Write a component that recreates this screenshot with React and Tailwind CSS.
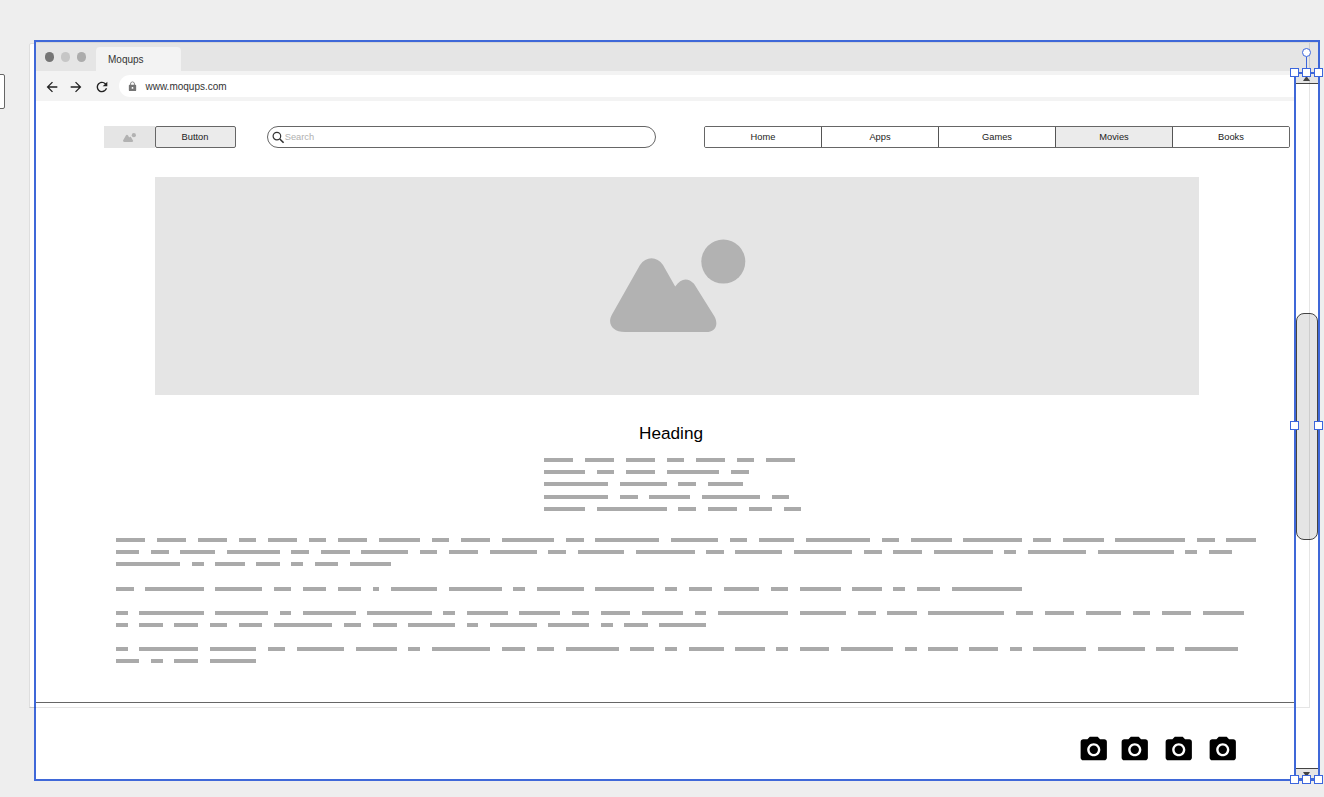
import React from "react";
import { MdArrowBack, MdArrowForward, MdRefresh, MdLock, MdPhotoCamera } from "react-icons/md";

const UNIT = 5.845;

const INTRO = [
  [5, 5, 5, 3, 5, 3, 5],
  [7, 3, 5, 9, 3],
  [11, 8, 3, 6],
  [11, 3, 7, 10, 3],
  [7, 12, 3, 5, 4, 3],
];

const PARAGRAPHS = [
  [
    [5, 5, 5, 3, 5, 3, 5, 7, 3, 5, 9, 3, 11, 8, 3, 6, 11, 3, 7, 10, 3, 7, 12, 3, 5],
    [4, 3, 6, 9, 3, 5, 8, 3, 5, 8, 3, 8, 10, 3, 8, 10, 3, 5, 10, 2, 10, 13, 2, 4],
    [11, 2, 5, 4, 2, 4, 7],
  ],
  [[3, 10, 8, 3, 4, 4, 1, 8, 9, 2, 8, 10, 2, 4, 6, 3, 7, 5, 2, 4, 12]],
  [
    [2, 11, 9, 2, 9, 11, 2, 7, 7, 3, 5, 7, 2, 12, 8, 3, 5, 13, 3, 5, 6, 3, 5, 7],
    [2, 4, 4, 3, 4, 10, 3, 4, 8, 2, 8, 7, 2, 4, 8],
  ],
  [
    [2, 10, 8, 3, 8, 7, 2, 10, 4, 3, 9, 4, 2, 6, 5, 2, 5, 9, 2, 5, 5, 2, 9, 8, 3, 9],
    [4, 2, 4, 8],
  ],
];

function Line({ words }) {
  return (
    <div className="flex h-3 shrink-0 items-start" style={{ columnGap: 2 * UNIT }}>
      {words.map((n, i) => (
        <div key={i} className="h-1 shrink-0 bg-[#aaaaaa]" style={{ width: n * UNIT }} />
      ))}
    </div>
  );
}

function Picture({ className }) {
  return (
    <svg viewBox="0 0 136 94" className={className} fill="#b2b2b2">
      <circle cx="113.3" cy="22.6" r="22" />
      <path d="M30 26C36 17 47 17 53 26L65.2 47.6C71 38.8 78 38.4 84 44.8L104.5 77.6C109 86.5 105 93 96 93H15C2 93-3 84 2 75.5Z" />
    </svg>
  );
}

function SearchIcon() {
  return (
    <svg viewBox="0 0 13 13" className="h-[13px] w-[13px] shrink-0" fill="none" stroke="#333">
      <circle cx="4.9" cy="5.1" r="3.8" strokeWidth="1.2" />
      <path d="M7.8 8L11.6 11.8" strokeWidth="1.6" />
    </svg>
  );
}

function Handle({ className }) {
  return <div className={`absolute size-[9px] border border-[#3b66dd] bg-white ${className}`} />;
}

function TabBar() {
  return (
    <div className="flex h-[29px] shrink-0 items-end border-t border-[#d6d6d6] bg-[#e5e5e5]">
      <div className="flex gap-[6.5px] self-start pt-[9px] pl-[9px]">
        <div className="size-[9.5px] rounded-full bg-[#757575]" />
        <div className="size-[9.5px] rounded-full bg-[#c6c6c6]" />
        <div className="size-[9.5px] rounded-full bg-[#acacac]" />
      </div>
      <div className="ml-[10px] flex h-6 w-[85px] items-center rounded-t-[4px] bg-[#f3f3f3] pt-px pl-3 text-[10px] text-[#333]">
        Moqups
      </div>
    </div>
  );
}

function Toolbar() {
  return (
    <div className="flex h-[30px] shrink-0 items-center bg-[#f3f3f3] pl-[8px] text-[#222]">
      <MdArrowBack className="mt-[2px] size-[16px]" />
      <MdArrowForward className="mt-[2px] ml-[8.5px] size-[16px]" />
      <MdRefresh className="mt-[2px] ml-[10px] size-[16px]" />
      <div className="ml-[8.5px] flex h-[22px] flex-1 items-center rounded-l-full bg-white pt-px pl-[8.5px] text-[10px] text-[#333]">
        <MdLock className="mr-[7.5px] size-[11px] text-[#757575]" />
        www.moqups.com
      </div>
    </div>
  );
}

function NavRow() {
  return (
    <div className="mt-[25px] flex h-[22px] shrink-0 pl-[68px] text-[9.3px] text-[#222]">
      <div className="flex w-[51px] items-center justify-center bg-[#e5e5e5]">
        <Picture className="h-[9px] w-[13px]" />
      </div>
      <div className="flex w-[81px] items-center justify-center rounded-[2px] border border-[#666] bg-[#ebebeb] pt-px">Button</div>
      <div className="ml-[31px] flex w-[389px] items-center rounded-full border border-[#666] bg-white pl-[4.2px] text-[#b0b0b0]">
        <SearchIcon />
        <span className="pt-px">Search</span>
      </div>
      <div className="ml-[48px] flex w-[586px] divide-x divide-[#555] overflow-hidden rounded-[2px] border border-[#666]">
        {["Home", "Apps", "Games", "Movies", "Books"].map((t) => (
          <div key={t} className={`flex flex-1 items-center justify-center pt-px pl-px ${t === "Movies" ? "bg-[#ebebeb]" : "bg-white"}`}>
            {t}
          </div>
        ))}
      </div>
    </div>
  );
}

function Scrollbar() {
  return (
    <div className="flex w-[23px] shrink-0 flex-col border-l border-[#333] bg-white">
      <div className="flex h-[13px] shrink-0 items-start justify-center border-b border-[#444] bg-[#e5e5e5] pt-[5px]">
        <svg viewBox="0 0 7 5" className="h-[5px] w-[7px]"><path d="M0 5L3.5 0L7 5Z" fill="#444" /></svg>
      </div>
      <div className="mt-[229px] h-[227px] shrink-0 rounded-[8px] border border-[#444] bg-[#e5e5e5]" />
      <div className="mt-auto flex h-[11px] items-start justify-center border-t border-[#444] bg-[#e5e5e5] pt-[3px]">
        <svg viewBox="0 0 7 5" className="h-[5px] w-[7px]"><path d="M0 0H7L3.5 5Z" fill="#444" /></svg>
      </div>
    </div>
  );
}

export default function App() {
  return (
    <div className="relative h-[797px] w-[1324px] overflow-hidden bg-[#eeeeee] pt-10 pl-[33.5px] font-['Liberation_Sans',Arial,sans-serif]">
      <div className="absolute top-[74px] -left-2 h-[35px] w-[13px] rounded-[2px] border border-[#666] bg-white" />
      <div className="absolute top-[43px] left-[29px] h-[665px] w-[1281px] rounded-[2px] border border-[#dedede] bg-white" />

      <div className="relative flex h-[741px] w-[1286px] flex-col border-2 border-[#3f68d8] bg-white">
        <TabBar />
        <div className="flex min-h-0 flex-1">
          <div className="flex w-[1259px] shrink-0 flex-col">
            <Toolbar />
            <NavRow />
            <div className="mt-[29px] ml-[119px] flex h-[218px] w-[1044px] shrink-0 justify-center bg-[#e5e5e5] pt-[62px] pl-[2px]">
              <Picture className="h-[94px] w-[136px]" />
            </div>
            <div className="mt-[26px] ml-[603.5px] h-6 text-[17.2px] leading-6 text-black">Heading</div>
            <div className="mt-[13px] ml-[508.5px] flex flex-col">
              {INTRO.map((words, i) => (
                <div key={i} className={i === 3 ? "pt-px" : ""}><Line words={words} /></div>
              ))}
            </div>
            <div className="mt-[19px] ml-[80.5px] flex flex-col gap-3">
              {PARAGRAPHS.map((lines, i) => (
                <div key={i} className={i === 1 ? "mt-px" : ""}>
                  {lines.map((words, j) => <Line key={j} words={words} />)}
                </div>
              ))}
            </div>
            <div className="mt-[31px] flex min-h-0 flex-1 items-start border-t border-[#666] pt-[30.5px] pl-[1042.3px]">
              <MdPhotoCamera className="size-[31.5px] shrink-0 text-black" />
              <MdPhotoCamera className="ml-[9.8px] size-[31.5px] shrink-0 text-black" />
              <MdPhotoCamera className="ml-[12.5px] size-[31.5px] shrink-0 text-black" />
              <MdPhotoCamera className="ml-[12px] size-[31.5px] shrink-0 text-black" />
            </div>
          </div>
          <Scrollbar />
        </div>
      </div>

      <div className="pointer-events-none absolute top-[43px] left-[29px] h-[665px] w-[1281px] border-r border-b border-black/10" />
      <div className="absolute top-[72px] left-[1294px] h-[708px] w-[26px] border-2 border-[#3f68d8]" />
      <div className="absolute top-[57px] left-[1306px] h-4 w-px bg-[#3b66dd]" />
      <div className="absolute top-12 left-[1302px] size-[9px] rounded-full border border-[#3b66dd] bg-white" />
      <Handle className="top-[68px] left-[1290px]" />
      <Handle className="top-[68px] left-[1302px]" />
      <Handle className="top-[68px] left-[1314px]" />
      <Handle className="top-[421px] left-[1290px]" />
      <Handle className="top-[421px] left-[1314px]" />
      <Handle className="top-[775px] left-[1290px]" />
      <Handle className="top-[775px] left-[1302px]" />
      <Handle className="top-[775px] left-[1314px]" />
    </div>
  );
}
